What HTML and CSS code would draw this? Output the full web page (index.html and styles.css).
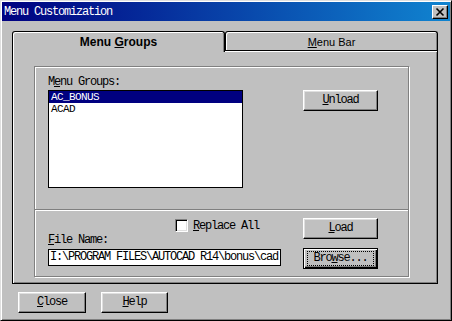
FILE: index.html
```html
<!DOCTYPE html>
<html lang="en">
<head>
    <meta charset="UTF-8">
    <title>Menu Customization</title>
    <link rel="stylesheet" href="styles.css">
</head>
<body>

<div class="window">
    <!-- Title bar -->
    <div class="titlebar">
        <span class="title">Menu Customization</span>
        <span class="close-x">
            <svg width="16" height="14" viewBox="0 0 16 14">
                <path d="M4.5 3.5 L11.5 10.5 M11.5 3.5 L4.5 10.5" stroke="#000" stroke-width="1.6" fill="none"/>
            </svg>
        </span>
    </div>

    <!-- Tabs -->
    <div class="tabs">
        <div class="tab active">Menu <u>G</u>roups</div>
        <div class="tab"><u>M</u>enu Bar</div>
    </div>

    <div class="panel">
        <div class="frame">
            <div class="frame-top">
                <div class="list-col">
                    <div class="label">M<u>e</u>nu Groups:</div>
                    <div class="list">
                        <div class="row selected">AC_BONUS</div>
                        <div class="row">ACAD</div>
                    </div>
                </div>
                <button class="btn unload"><u>U</u>nload</button>
            </div>
            <div class="frame-bottom">
                <div class="file-col">
                    <div class="check-row">
                        <span class="checkbox"></span>
                        <span><u>R</u>eplace All</span>
                    </div>
                    <div class="label file-label"><u>F</u>ile Name:</div>
                    <div class="field">I:\PROGRAM FILES\AUTOCAD R14\bonus\cad</div>
                </div>
                <div class="btn-col">
                    <button class="btn"><u>L</u>oad</button>
                    <button class="btn default"><span class="focus">Bro<u>w</u>se...</span></button>
                </div>
            </div>
        </div>
    </div>

    <!-- Bottom buttons -->
    <div class="footer">
        <button class="btn close"><u>C</u>lose</button>
        <button class="btn help"><u>H</u>elp</button>
    </div>
</div>

</body>
</html>
```

FILE: styles.css
```css
* {
    box-sizing: border-box;
}
body {
    margin: 0;
    background: #c0c0c0;
    font-family: "Liberation Mono", "Courier New", monospace;
    font-size: 12px;
    letter-spacing: -1.2px;
    color: #000;
}
.window {
    width: 452px;
    height: 321px;
    background: #c0c0c0;
    border: 1px solid;
    border-color: #dfdfdf #000 #000 #dfdfdf;
    box-shadow: inset 1px 1px #fff, inset -1px -1px #808080;
    padding: 1px;
}
.titlebar {
    height: 19px;
    display: flex;
    align-items: center;
    justify-content: space-between;
    padding: 0 2px;
    background: linear-gradient(90deg, #000080, #1084d0);
    color: #fff;
}
.title {
    line-height: 19px;
    padding-top: 1px;
}
.close-x {
    width: 16px;
    height: 14px;
    display: block;
    background: #c0c0c0;
    border: 1px solid;
    border-color: #fff #000 #000 #fff;
    box-shadow: inset -1px -1px #808080;
}
.close-x svg {
    display: block;
    margin: -1px 0 0 -1px;
}

/* tabs */
.tabs {
    display: flex;
    height: 19px;
    margin: 10px 0 0 10px;
}
.tab {
    width: 213px;
    height: 19px;
    border: 1px solid #000;
    border-bottom: none;
    border-radius: 3px 3px 0 0;
    box-shadow: inset 1px 1px #fff, inset -1px 0 #808080;
    font-family: "Liberation Sans", Arial, sans-serif;
    font-size: 11px;
    letter-spacing: 0;
    line-height: 17px;
    padding-top: 2px;
    text-align: center;
}
.tab.active {
    position: relative;
    z-index: 1;
    height: 21px;
    margin-bottom: -2px;
    background: #c0c0c0;
    font-weight: bold;
    font-size: 12px;
}
.panel {
    width: 426px;
    height: 234px;
    margin-left: 10px;
    border: 1px solid #000;
    box-shadow: inset 1px 1px #fff, inset -1px -1px #808080;
    padding: 15px 0 0 21px;
}

/* etched group frame */
.frame {
    width: 375px;
    height: 211px;
    border: 1px solid #808080;
    box-shadow: inset 1px 1px #fff, 1px 1px #fff;
}
.frame-top {
    height: 143px;
    display: flex;
    align-items: flex-start;
    padding-left: 13px;
    border-bottom: 1px solid #808080;
    box-shadow: 0 1px #fff;
}
.list-col {
    width: 195px;
    padding-top: 9px;
}
.label {
    line-height: 12px;
    height: 12px;
}
.list {
    height: 98px;
    margin-top: 2px;
    background: #fff;
    border: 1px solid #000;
}
.row {
    height: 12px;
    line-height: 12px;
    font-size: 11px;
    letter-spacing: -0.6px;
    padding-left: 2px;
    overflow: hidden;
}
.row.selected {
    background: #000080;
    color: #fff;
}
.frame-bottom {
    display: flex;
    padding-left: 13px;
}
.file-col {
    width: 233px;
    padding-top: 9px;
}
.check-row {
    display: flex;
    align-items: center;
    gap: 5px;
    height: 13px;
    padding-left: 127px;
}
.checkbox {
    width: 13px;
    height: 13px;
    background: #fff;
    border: 1px solid;
    border-color: #808080 #fff #fff #808080;
    box-shadow: inset 1px 1px #000, inset -1px -1px #dfdfdf;
}
.file-label {
    margin-top: 2px;
}
.field {
    height: 17px;
    margin-top: 3px;
    background: #fff;
    border: 1px solid #000;
    line-height: 15px;
    padding-left: 1px;
    white-space: nowrap;
    overflow: hidden;
}
.btn-col {
    display: flex;
    flex-direction: column;
    gap: 9px;
    padding: 8px 0 0 22px;
}

/* buttons */
.btn {
    width: 75px;
    height: 21px;
    padding: 0;
    background: #c0c0c0;
    border: 1px solid;
    border-color: #fff #000 #000 #fff;
    box-shadow: inset -1px -1px #808080, inset 1px 1px #dfdfdf;
    font: inherit;
    letter-spacing: inherit;
    color: #000;
    line-height: 19px;
    text-align: center;
}
.btn.unload {
    margin: 23px 0 0 60px;
}
.btn.default {
    border-color: #000;
    box-shadow: inset 1px 1px #fff, inset -1px -1px #000, inset -2px -2px #808080;
    padding: 2px 3px;
}
.focus {
    display: block;
    height: 15px;
    line-height: 13px;
    border: 1px dotted #000;
}
.footer {
    display: flex;
    gap: 15px;
    margin-top: 8px;
    padding-left: 16px;
}
.btn.close {
    width: 68px;
}
.btn.help {
    width: 67px;
}
```
